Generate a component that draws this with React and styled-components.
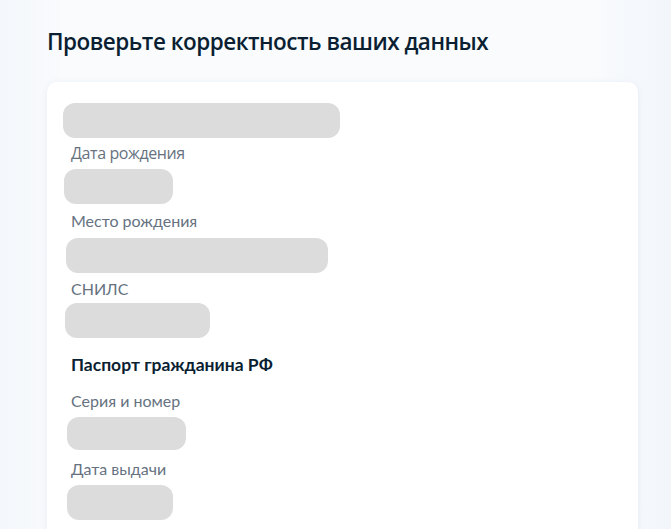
import React from "react";
import styled, { createGlobalStyle } from "styled-components";

const Global = createGlobalStyle`
  html, body { margin: 0; padding: 0; background: #f6f8fb; }
  body { font-family: Lato, "Noto Sans", sans-serif; }
`;

const Page = styled.div`
  width: 671px;
  height: 529px;
  overflow: hidden;
  box-sizing: border-box;
  padding: 27px 33px 0 47px;
  background: linear-gradient(90deg, #f4f7fb 0%, #f9fbfd 10%, #f9fbfd 88%, #f2f6fb 100%);
`;

const Title = styled.h1`
  margin: 0;
  font-family: "Open Sans", sans-serif;
  font-weight: 600;
  font-size: 22.5px;
  line-height: 30px;
  letter-spacing: -0.5px;
  color: #0b1f33;
`;

const Card = styled.section`
  margin-top: 25px;
  background: #ffffff;
  border-radius: 10px;
  box-shadow: 0 1px 6px rgba(120, 150, 190, 0.12);
  padding: 21px 16px 40px 16px;
  display: flex;
  flex-direction: column;
  align-items: flex-start;
`;

const Placeholder = styled.div`
  width: ${(p) => p.$w}px;
  height: ${(p) => p.$h || 35}px;
  margin-left: ${(p) => p.$x || 0}px;
  border-radius: 12px;
  background: #dcdcdc;
`;

const Label = styled.div`
  margin: ${(p) => p.$mt ?? 5}px 0 ${(p) => p.$mb ?? 5}px 8px;
  font-size: 16px;
  line-height: 22px;
  color: #66727f;
  font-family: ${(p) => (p.$alt ? '"Open Sans", sans-serif' : "Lato, sans-serif")};
  letter-spacing: ${(p) => (p.$alt ? "-0.4px" : "0")};
`;

const Section = styled.h2`
  margin: 15px 0 13px 8px;
  font-family: Lato, sans-serif;
  font-weight: 700;
  font-size: 17.5px;
  line-height: 24px;
  color: #0b1f33;
`;

export default function App() {
  return (
    <>
      <Global />
      <Page>
        <Title>Проверьте корректность ваших данных</Title>
        <Card>
          <Placeholder $w={277} />
          <Label $alt $mt={4} $mb={5}>Дата рождения</Label>
          <Placeholder $w={109} $x={1} />
          <Label $mt={6} $mb={6}>Место рождения</Label>
          <Placeholder $w={262} $x={3} />
          <Label $mt={5} $mb={3}>СНИЛС</Label>
          <Placeholder $w={145} $x={2} />
          <Section>Паспорт гражданина РФ</Section>
          <Label $mt={0} $mb={5}>Серия и номер</Label>
          <Placeholder $w={119} $h={33} $x={4} />
          <Label $mt={8} $mb={5}>Дата выдачи</Label>
          <Placeholder $w={106} $x={4} />
        </Card>
      </Page>
    </>
  );
}
